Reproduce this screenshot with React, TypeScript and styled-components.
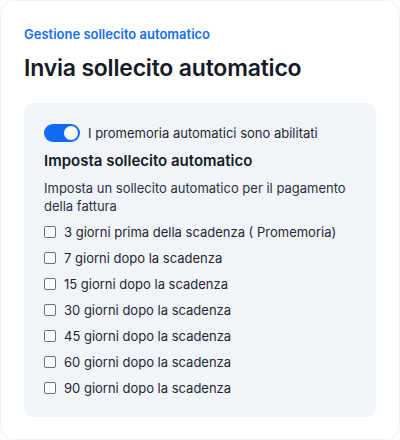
import React from 'react';
import styled, { createGlobalStyle } from 'styled-components';

const GlobalStyle = createGlobalStyle`
    html, body {
        margin: 0;
        padding: 0;
        background: #ffffff;
    }
    body {
        font-family: Inter, 'Noto Sans', sans-serif;
        -webkit-font-smoothing: antialiased;
    }
`;

const Card = styled.div`
    box-sizing: border-box;
    width: 400px;
    height: 440px;
    background: #ffffff;
    border: 1px solid #f1f2f4;
    border-radius: 14px;
    padding: 24px 23px 0 23px;
    display: flex;
    flex-direction: column;
`;

const Eyebrow = styled.div`
    font-size: 13px;
    font-weight: 600;
    color: #1570ef;
    line-height: 18px;
`;

const Title = styled.h1`
    margin: 8px 0 0 0;
    font-size: 23px;
    font-weight: 600;
    line-height: 34px;
    letter-spacing: -0.2px;
    color: #141a26;
`;

const Panel = styled.div`
    margin-top: 18px;
    background: #f1f5f9;
    border-radius: 9px;
    padding: 20px 20px 16px 20px;
    display: flex;
    flex-direction: column;
`;

const ToggleRow = styled.label`
    display: flex;
    align-items: center;
    gap: 8px;
    font-size: 13px;
    color: #1f2633;
    line-height: 20px;
`;

const Track = styled.span<{ $on: boolean }>`
    position: relative;
    width: 36px;
    height: 18px;
    border-radius: 9px;
    background: ${(p) => (p.$on ? '#0f6cf2' : '#c7cdd6')};
    flex-shrink: 0;
`;

const Knob = styled.span<{ $on: boolean }>`
    position: absolute;
    top: 2px;
    left: ${(p) => (p.$on ? '20px' : '2px')};
    width: 14px;
    height: 14px;
    border-radius: 50%;
    background: #ffffff;
`;

const SectionTitle = styled.h2`
    margin: 7px 0 0 0;
    font-size: 15px;
    font-weight: 600;
    line-height: 22px;
    color: #141a26;
`;

const Description = styled.p`
    margin: 7px 0 0 0;
    font-size: 13px;
    line-height: 18px;
    color: #2a313d;
`;

const CheckList = styled.div`
    margin-top: 4px;
    display: flex;
    flex-direction: column;
`;

const CheckRow = styled.label`
    display: flex;
    align-items: center;
    gap: 8px;
    height: 26px;
    font-size: 13px;
    color: #1f2633;
`;

const Box = styled.span`
    box-sizing: border-box;
    width: 12px;
    height: 12px;
    border: 1px solid #6b717c;
    border-radius: 2px;
    background: #ffffff;
    flex-shrink: 0;
`;

const options = [
    '3 giorni prima della scadenza ( Promemoria)',
    '7 giorni dopo la scadenza',
    '15 giorni dopo la scadenza',
    '30 giorni dopo la scadenza',
    '45 giorni dopo la scadenza',
    '60 giorni dopo la scadenza',
    '90 giorni dopo la scadenza',
];

export default function App() {
    const [enabled] = React.useState(true);

    return (
        <>
            <GlobalStyle />
            <Card>
                <Eyebrow>Gestione sollecito automatico</Eyebrow>
                <Title>Invia sollecito automatico</Title>
                <Panel>
                    <ToggleRow>
                        <Track $on={enabled}>
                            <Knob $on={enabled} />
                        </Track>
                        I promemoria automatici sono abilitati
                    </ToggleRow>
                    <SectionTitle>Imposta sollecito automatico</SectionTitle>
                    <Description>
                        Imposta un sollecito automatico per il pagamento della fattura
                    </Description>
                    <CheckList>
                        {options.map((label) => (
                            <CheckRow key={label}>
                                <Box />
                                {label}
                            </CheckRow>
                        ))}
                    </CheckList>
                </Panel>
            </Card>
        </>
    );
}
